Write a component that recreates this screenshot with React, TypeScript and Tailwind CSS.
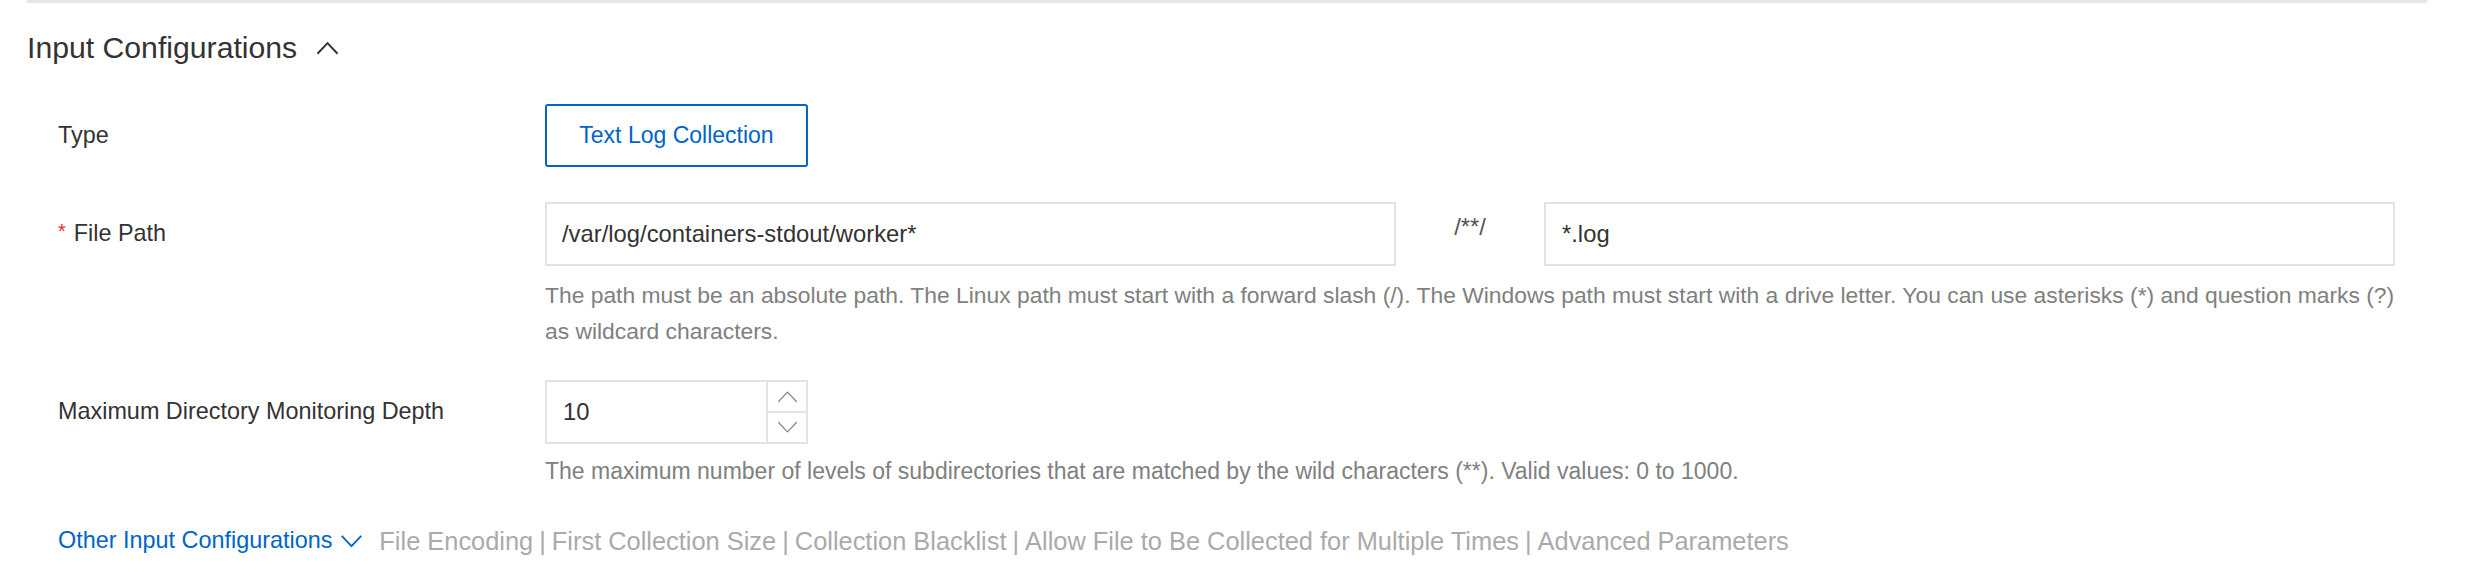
import React from "react";

const ChevronUp = ({ className = "", w = 2 }: { className?: string; w?: number }) => (
  <svg viewBox="0 0 24 14" className={className} fill="none">
    <polyline points="1.5,13 12,2 22.5,13" stroke="currentColor" strokeWidth={w} />
  </svg>
);

const ChevronDown = ({ className = "", w = 2 }: { className?: string; w?: number }) => (
  <svg viewBox="0 0 24 14" className={className} fill="none">
    <polyline points="1.5,1 12,12 22.5,1" stroke="currentColor" strokeWidth={w} />
  </svg>
);

const LINKS = [
  "File Encoding",
  "First Collection Size",
  "Collection Blacklist",
  "Allow File to Be Collected for Multiple Times",
  "Advanced Parameters",
];

const App = () => {
  return (
    <div className="w-[2476px] h-[574px] overflow-hidden bg-white font-['Liberation_Sans',Arial,sans-serif] text-[23.4px] text-[#333]">
      <div className="ml-[27px] w-[2400px] h-[3px] bg-[#e6e6e6]" />

      {/* Section title */}
      <div className="ml-[27px] mt-[15px] h-[60px] flex items-center gap-[19px]">
        <span className="text-[30.2px] text-[#333]">Input Configurations</span>
        <ChevronUp className="w-[23px] h-[14px] text-[#333]" />
      </div>

      <div className="ml-[58px] mt-[26px]">
        {/* Type */}
        <div className="flex items-center h-[63px]">
          <div className="w-[487px]">Type</div>
          <button className="w-[263px] h-[63px] border-2 border-[#0064c8] rounded-[3px] text-[#0064c8] text-[23px]">
            Text Log Collection
          </button>
        </div>

        {/* File Path */}
        <div className="flex items-center h-[64px] mt-[35px] text-[23.8px]">
          <div className="w-[487px] flex items-center text-[23.4px]">
            <span className="text-[#e0301e] text-[20px] mr-[8px] -mt-[6px]">*</span>
            <span>File Path</span>
          </div>
          <div className="w-[851px] h-[64px] border-2 border-[#e3e3e3] flex items-center px-[15px]">
            /var/log/containers-stdout/worker*
          </div>
          <div className="w-[148px] flex justify-center -mt-[14px] text-[#555]">/**/</div>
          <div className="w-[851px] h-[64px] border-2 border-[#e3e3e3] flex items-center px-[16px]">
            *.log
          </div>
        </div>
        <div className="ml-[487px] mt-[11px] leading-[36px] text-[22.85px] text-[#808080]">
          <div>
            The path must be an absolute path. The Linux path must start with a forward slash (/). The Windows path must start with a drive letter. You can use asterisks (*) and question marks (?)
          </div>
          <div>as wildcard characters.</div>
        </div>

        {/* Max depth */}
        <div className="flex items-center h-[64px] mt-[31px]">
          <div className="w-[487px]">Maximum Directory Monitoring Depth</div>
          <div className="w-[263px] h-[64px] border-2 border-[#e3e3e3] flex text-[23.8px]">
            <div className="flex-1 flex items-center px-[16px]">10</div>
            <div className="w-[40px] flex flex-col border-l-2 border-[#e3e3e3]">
              <div className="flex-1 flex items-center justify-center border-b-2 border-[#e3e3e3]">
                <ChevronUp className="w-[21px] h-[13px] text-[#888]" w={1.5} />
              </div>
              <div className="flex-1 flex items-center justify-center">
                <ChevronDown className="w-[21px] h-[13px] text-[#888]" w={1.5} />
              </div>
            </div>
          </div>
        </div>
        <div className="ml-[487px] mt-[9px] leading-[36px] text-[23px] text-[#808080]">
          The maximum number of levels of subdirectories that are matched by the wild characters (**). Valid values: 0 to 1000.
        </div>

        {/* Other input configurations */}
        <div className="mt-[34px] h-[36px] flex items-center">
          <span className="text-[#0064c8]">Other Input Configurations</span>
          <ChevronDown className="ml-[8px] w-[23px] h-[13px] text-[#0064c8]" />
          <span className="ml-[16px] text-[25.4px] text-[#aaa]">
            {LINKS.map((l, i) => (
              <React.Fragment key={l}>
                {i > 0 && <span className="mx-[6px]">|</span>}
                {l}
              </React.Fragment>
            ))}
          </span>
        </div>
      </div>
    </div>
  );
};

export default App;
